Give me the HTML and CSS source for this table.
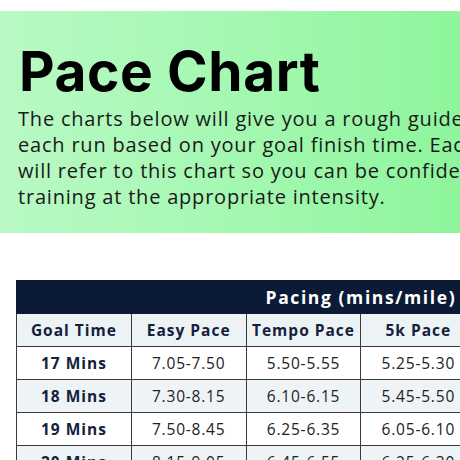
FILE: index.html
```html
<!DOCTYPE html>
<html lang="en">
<head>
<meta charset="utf-8">
<title>Pace Chart</title>
<link rel="stylesheet" href="styles.css">
</head>
<body>
<div class="page">
  <section class="hero">
    <h1 class="title">Pace Chart</h1>
    <p class="intro">The charts below will give you a rough guide for<br>each run based on your goal finish time. Each session<br>will refer to this chart so you can be confident you are<br>training at the appropriate intensity.</p>
  </section>
  <div class="table-wrap">
    <table class="pace">
      <thead>
        <tr class="band">
          <th></th>
          <th colspan="4">Pacing (mins/mile)</th>
        </tr>
        <tr class="heads">
          <th>Goal Time</th>
          <th>Easy Pace</th>
          <th>Tempo Pace</th>
          <th>5k Pace</th>
          <th>Interval Pace</th>
        </tr>
      </thead>
      <tbody>
        <tr><th>17 Mins</th><td>7.05-7.50</td><td>5.50-5.55</td><td>5.25-5.30</td><td>5.10-5.15</td></tr>
        <tr class="alt"><th>18 Mins</th><td>7.30-8.15</td><td>6.10-6.15</td><td>5.45-5.50</td><td>5.30-5.35</td></tr>
        <tr><th>19 Mins</th><td>7.50-8.45</td><td>6.25-6.35</td><td>6.05-6.10</td><td>5.50-5.55</td></tr>
        <tr class="alt"><th>20 Mins</th><td>8.15-9.05</td><td>6.45-6.55</td><td>6.25-6.30</td><td>6.10-6.15</td></tr>
      </tbody>
    </table>
  </div>
</div>
</body>
</html>
```

FILE: styles.css
```css
html, body {
  margin: 0;
  padding: 0;
  background: #ffffff;
  overflow: hidden;
}

.page {
  padding-top: 11px;
  width: 460px;
  overflow: hidden;
}

.hero {
  width: 480px;
  height: 222px;
  box-sizing: border-box;
  padding: 33px 0 0 18px;
  background: linear-gradient(90deg, #b9f9c5 0%, #a6f8b3 45%, #8cf59a 100%);
}

.title {
  margin: 0 0 0 1px;
  font-family: Inter, "Liberation Sans", sans-serif;
  font-weight: 700;
  font-size: 55px;
  line-height: 55px;
  color: #000000;
  letter-spacing: 0.6px;
}

.intro {
  margin: 7px 0 0 0;
  white-space: nowrap;
  font-family: "Open Sans", "DejaVu Sans", sans-serif;
  font-size: 20px;
  line-height: 26px;
  letter-spacing: 0.8px;
  color: #1a1a1a;
}

.table-wrap {
  margin-top: 47px;
  padding-left: 16px;
}

.pace {
  border-collapse: collapse;
  table-layout: fixed;
  width: 575px;
  font-family: "Open Sans", "DejaVu Sans", sans-serif;
  font-size: 15.5px;
  letter-spacing: 0.8px;
  color: #222222;
}

.pace th,
.pace td {
  border: 1px solid #3a3a3a;
  height: 32px;
  padding: 0;
  text-align: center;
  white-space: nowrap;
}

.pace th {
  font-weight: 700;
  color: #13213c;
  letter-spacing: 1px;
}

.band th {
  background: #0c1b35;
  color: #ffffff;
  font-size: 17.5px;
  letter-spacing: 1.6px;
  border-color: #0c1b35;
}

.heads th {
  background: #edf2f5;
}

.pace tbody tr.alt th,
.pace tbody tr.alt td {
  background: #eef3f6;
}
```
